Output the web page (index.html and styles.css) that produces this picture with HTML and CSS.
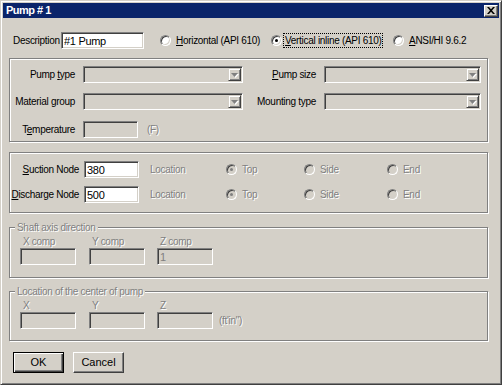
FILE: index.html
```html
<!DOCTYPE html>
<html lang="en">

<head>
    <meta charset="UTF-8">
    <meta name="viewport" content="width=device-width, initial-scale=1.0">
    <title>Pump # 1</title>

    <link rel="stylesheet" href="styles.css">
</head>

<body>
    <div id="dialog">
        <div class="titlebar">
            <span class="title">Pump # 1</span>
            <button class="close" title="Close">
                <svg width="8" height="7" viewBox="0 0 8 7">
                    <path d="M0 0h2l2 2.3L6 0h2L5 3.5 8 7H6L4 4.7 2 7H0l3-3.5z" fill="#000" />
                </svg>
            </button>
        </div>

        <section class="desc_row">
            <label class="desc_label" for="description">Description</label>
            <input type="text" class="field sunken" id="description" value="#1 Pump" />
            <label class="radio r_horizontal"><span class="dot"></span><span class="rtext"><u>H</u>orizontal (API
                    610)</span></label>
            <label class="radio r_vertical"><span class="dot checked"></span><span class="rtext focus"><u>V</u>ertical
                    inline (API 610)</span></label>
            <label class="radio"><span class="dot"></span><span class="rtext"><u>A</u>NSI/HI 9.6.2</span></label>
        </section>

        <!-- pump type / size -->
        <section class="group" id="pump_group">
            <div class="grid4">
                <span class="lbl">Pump <u>t</u>ype</span>
                <div class="combo sunken"><span class="combo_btn"><svg width="7" height="4" viewBox="0 0 7 4">
                            <path d="M0 0h7L3.5 4z" fill="#808080" />
                        </svg></span></div>
                <span class="lbl"><u>P</u>ump size</span>
                <div class="combo sunken"><span class="combo_btn"><svg width="7" height="4" viewBox="0 0 7 4">
                            <path d="M0 0h7L3.5 4z" fill="#808080" />
                        </svg></span></div>

                <span class="lbl">Material group</span>
                <div class="combo sunken"><span class="combo_btn"><svg width="7" height="4" viewBox="0 0 7 4">
                            <path d="M0 0h7L3.5 4z" fill="#808080" />
                        </svg></span></div>
                <span class="lbl">Mounting type</span>
                <div class="combo sunken"><span class="combo_btn"><svg width="7" height="4" viewBox="0 0 7 4">
                            <path d="M0 0h7L3.5 4z" fill="#808080" />
                        </svg></span></div>

                <span class="lbl temp_lbl">T<u>e</u>mperature</span>
                <div class="temp_row">
                    <input type="text" class="field sunken small" disabled />
                    <span class="dis unit">(F)</span>
                </div>
            </div>
        </section>

        <!-- nodes -->
        <section class="group" id="node_group">
            <div class="node_row">
                <span class="node_label"><u>S</u>uction Node</span>
                <input type="text" class="field sunken small" value="380" />
                <span class="dis loc_label">Location</span>
                <span class="radio loc_top"><span class="dot disabled checked"></span><span class="rtext dis">Top</span></span>
                <span class="radio loc_side"><span class="dot disabled"></span><span class="rtext dis">Side</span></span>
                <span class="radio"><span class="dot disabled"></span><span class="rtext dis">End</span></span>
            </div>
            <div class="node_row">
                <span class="node_label"><u>D</u>ischarge Node</span>
                <input type="text" class="field sunken small" value="500" />
                <span class="dis loc_label">Location</span>
                <span class="radio loc_top"><span class="dot disabled checked"></span><span class="rtext dis">Top</span></span>
                <span class="radio loc_side"><span class="dot disabled"></span><span class="rtext dis">Side</span></span>
                <span class="radio"><span class="dot disabled"></span><span class="rtext dis">End</span></span>
            </div>
        </section>

        <section class="group titled" id="shaft_group">
            <span class="gtitle dis">Shaft axis direction</span>
            <div class="comp_grid">
                <span class="dis comp_lbl">X comp</span>
                <span class="dis comp_lbl">Y comp</span>
                <span class="dis comp_lbl">Z comp</span>
                <span></span>
                <input type="text" class="field sunken comp" disabled />
                <input type="text" class="field sunken comp" disabled />
                <input type="text" class="field sunken comp" value="1" disabled />
                <span></span>
            </div>
        </section>

        <section class="group titled" id="center_group">
            <span class="gtitle dis">Location of the center of pump</span>
            <div class="comp_grid">
                <span class="dis comp_lbl">X</span>
                <span class="dis comp_lbl">Y</span>
                <span class="dis comp_lbl">Z</span>
                <span></span>
                <input type="text" class="field sunken comp" disabled />
                <input type="text" class="field sunken comp" disabled />
                <input type="text" class="field sunken comp" disabled />
                <span class="dis unit_ft">(ft'in")</span>
            </div>
        </section>

        <div class="buttons">
            <button class="btn default">OK</button>
            <button class="btn">Cancel</button>
        </div>
    </div>
</body>

</html>
```

FILE: styles.css
```css
body {
    margin: 0;
    background-color: #d4d0c8;
    font-family: "Liberation Sans", Arial, sans-serif;
    font-size: 10px;
    letter-spacing: -0.3px;
    line-height: 13px;
    color: #000;
}

#dialog {
    width: 502px;
    height: 385px;
    box-sizing: border-box;
    padding: 2px;

    border: 1px solid;
    border-color: #d4d0c8 #404040 #404040 #d4d0c8;
    box-shadow: inset 1px 1px #fff, inset -1px -1px #808080;
}

/* title bar */
.titlebar {
    height: 15px;
    padding: 0 1px 0 3px;
    background-color: #0a246a;

    display: flex;
    align-items: center;
    justify-content: space-between;
}

.title {
    color: #fff;
    font-weight: bold;
    font-size: 11px;
    letter-spacing: -0.5px;
}

.close {
    width: 14px;
    height: 12px;
    padding: 0;
    background-color: #d4d0c8;

    border: 1px solid;
    border-color: #fff #404040 #404040 #fff;
    box-shadow: inset -1px -1px #808080;

    display: flex;
    align-items: center;
    justify-content: center;
}

/* shared widgets */
.sunken {
    box-sizing: border-box;
    border: 1px solid;
    border-color: #808080 #fff #fff #808080;
    box-shadow: inset 1px 1px #404040, inset -1px -1px #d4d0c8;
}

.field {
    height: 17px;
    margin: 0;
    padding: 0 0 0 2px;
    background-color: #fff;
    font: inherit;
    font-size: 11px;
    letter-spacing: -0.3px;
    color: #000;
    outline: none;
}

.field:disabled {
    background-color: #d4d0c8;
    color: #808080;
    -webkit-text-fill-color: #808080;
}

.dis {
    color: #808080;
    text-shadow: 1px 1px #fff;
}

.radio {
    display: flex;
    align-items: center;
}

.dot {
    width: 11px;
    height: 11px;
    flex: none;
    box-sizing: border-box;
    border-radius: 50%;
    background-color: #fff;

    border: 1px solid;
    border-color: #808080 #fff #fff #808080;
    box-shadow: inset 1px 1px #404040, inset -1px -1px #d4d0c8;

    display: flex;
    align-items: center;
    justify-content: center;
}

.dot.checked::after {
    content: "";
    width: 3px;
    height: 3px;
    border-radius: 50%;
    background-color: #000;
}

.dot.disabled {
    background-color: #d4d0c8;
}

.dot.disabled.checked::after {
    background-color: #808080;
}

.rtext {
    margin-left: 3px;
    padding: 1px 2px;
    white-space: nowrap;
}

.focus {
    outline: 1px dotted #000;
    outline-offset: -1px;
}

/* description row */
.desc_row {
    margin-top: 14px;
    padding-left: 10px;

    display: flex;
    align-items: center;
}

.desc_label {
    width: 48px;
}

#description {
    width: 83px;
}

.r_horizontal {
    margin-left: 16px;
    width: 111px;
}

.r_vertical {
    width: 122px;
}

.r_vertical .rtext {
    margin-left: 1px;
}

/* group boxes */
.group {
    width: 479px;
    box-sizing: border-box;
    margin-left: 6px;

    border: 1px solid #808080;
    box-shadow: inset 1px 1px #fff, 1px 1px #fff;
}

#pump_group {
    margin-top: 9px;
}

.grid4 {
    display: grid;
    grid-template-columns: 65px 160px 65px 157px;
    grid-auto-rows: 17px;
    column-gap: 8px;
    row-gap: 10px;

    padding: 7px 0 4px 0;
}

.lbl {
    align-self: center;
    text-align: right;
    white-space: nowrap;
}

.combo {
    height: 17px;
    padding: 1px;
    background-color: #d4d0c8;

    display: flex;
    justify-content: flex-end;
}

.combo_btn {
    width: 13px;
    height: 13px;
    box-sizing: border-box;

    border: 1px solid;
    border-color: #d4d0c8 #404040 #404040 #d4d0c8;
    box-shadow: inset 1px 1px #fff, inset -1px -1px #808080;

    display: flex;
    align-items: center;
    justify-content: center;
}

.combo_btn svg {
    filter: drop-shadow(1px 1px 0 #fff);
}

.temp_lbl,
.temp_row {
    margin-top: 1px;
}

.temp_row {
    grid-column: 2 / span 3;
    display: flex;
    align-items: center;
}

.small {
    width: 55px;
}

.unit {
    margin-left: 9px;
}

#node_group {
    margin-top: 10px;
    padding: 8px 0 9px 0;
}

.node_row {
    height: 17px;
    display: flex;
    align-items: center;
}

.node_row+.node_row {
    margin-top: 8px;
}

.node_label {
    width: 69px;
    margin-right: 5px;
    text-align: right;
    white-space: nowrap;
}

.loc_label {
    width: 76px;
    margin-left: 11px;
}

.loc_top {
    width: 78px;
}

.loc_side {
    width: 83px;
}

/* titled groups */
.titled {
    padding-bottom: 12px;
}

#shaft_group {
    margin-top: 14px;
}

#center_group {
    margin-top: 13px;
    padding-bottom: 11px;
}

.gtitle {
    display: table;
    margin: -7px 0 0 5px;
    padding: 0 2px;
    background-color: #d4d0c8;
}

.comp_grid {
    display: grid;
    grid-template-columns: 69px 68px 56px auto;
    padding: 1px 0 0 10px;
}

.comp_lbl {
    padding-left: 3px;
}

.comp {
    width: 56px;
}

.unit_ft {
    align-self: center;
    margin-left: 6px;
}

/* dialog buttons */
.buttons {
    margin: 11px 0 0 10px;
    display: flex;
    column-gap: 9px;
}

.btn {
    width: 51px;
    height: 21px;
    padding: 0;
    background-color: #d4d0c8;
    font: inherit;
    font-size: 11px;

    border: 1px solid;
    border-color: #fff #404040 #404040 #fff;
    box-shadow: inset -1px -1px #808080;
}

.btn.default {
    border-color: #000;
    box-shadow: inset 1px 1px #fff, inset -1px -1px #404040, inset -2px -2px #808080;
}
```
